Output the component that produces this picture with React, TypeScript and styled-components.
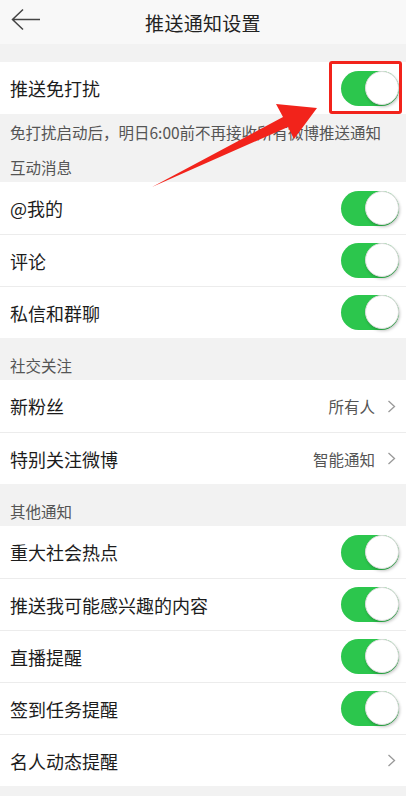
import React from "react"
import styled, { createGlobalStyle } from "styled-components"

const GlobalStyle = createGlobalStyle`
  html, body {
    margin: 0;
    padding: 0;
    background: #f2f2f2;
  }
  body {
    font-family: "Noto Sans CJK SC", "Noto Sans", sans-serif;
    -webkit-font-smoothing: antialiased;
  }
`

const Page = styled.div`
  position: relative;
  width: 406px;
  height: 796px;
  overflow: hidden;
  background: #f2f2f2;
`

const Header = styled.div`
  position: relative;
  display: flex;
  align-items: center;
  justify-content: center;
  height: 44px;
  background: #f8f8f8;
  margin-bottom: 18px;
`

const BackButton = styled.div`
  position: absolute;
  left: 11px;
  top: 8px;
  width: 30px;
  height: 24px;
  display: flex;
  align-items: center;
`

const Title = styled.div`
  font-size: 19px;
  color: #222;
  letter-spacing: 0.3px;
`

const Group = styled.div`
  background: #fff;
`

const Row = styled.div<{ first?: boolean }>`
  display: flex;
  align-items: center;
  justify-content: space-between;
  height: 52px;
  box-sizing: border-box;
  padding: 0 7px 0 10px;
  border-top: ${(p) => (p.first ? "none" : "1px solid #ececec")};
`

const Label = styled.div`
  font-size: 18px;
  color: #1c1c1c;
`

const Hint = styled.div`
  padding: 8px 10px;
  font-size: 15.5px;
  line-height: 20px;
  color: #555;
  white-space: nowrap;
`

const SectionTitle = styled.div<{ compact?: boolean }>`
  padding: ${(p) => (p.compact ? "8px" : "18px")} 10px 6px;
  font-size: 15.5px;
  line-height: 18px;
  color: #555;
`

const Right = styled.div`
  display: flex;
  align-items: center;
  gap: 12px;
  padding-right: 3px;
`

const Value = styled.div`
  font-size: 15.5px;
  color: #555;
`

const Track = styled.div`
  position: relative;
  width: 58px;
  height: 35px;
  border-radius: 18px;
  background: #2cc64d;
`

const Knob = styled.div`
  position: absolute;
  right: 0;
  top: 0;
  width: 34px;
  height: 34px;
  border-radius: 50%;
  background: #fff;
  border: 1px solid #dcdcdc;
  box-sizing: border-box;
  box-shadow: 1px 2px 3px rgba(0, 0, 0, 0.22);
`

const BottomSpace = styled.div`
  height: 18px;
`

const Highlight = styled.div`
  position: absolute;
  left: 329px;
  top: 61px;
  width: 73px;
  height: 53px;
  box-sizing: border-box;
  border: 3px solid #f2231b;
  border-radius: 3px;
`

const ArrowLayer = styled.svg`
  position: absolute;
  left: 0;
  top: 0;
  pointer-events: none;
`

const Toggle = () => (
  <Track>
    <Knob />
  </Track>
)

const Chevron = () => (
  <svg width="9" height="13" viewBox="0 0 9 13">
    <path d="M1.5 1 L7.5 6.5 L1.5 12" fill="none" stroke="#999" strokeWidth="1.3" />
  </svg>
)

type Item = { label: string; value?: string; toggle?: boolean }

const interaction: Item[] = [
  { label: "@我的", toggle: true },
  { label: "评论", toggle: true },
  { label: "私信和群聊", toggle: true },
]

const social: Item[] = [
  { label: "新粉丝", value: "所有人" },
  { label: "特别关注微博", value: "智能通知" },
]

const others: Item[] = [
  { label: "重大社会热点", toggle: true },
  { label: "推送我可能感兴趣的内容", toggle: true },
  { label: "直播提醒", toggle: true },
  { label: "签到任务提醒", toggle: true },
  { label: "名人动态提醒", value: "" },
]

const renderRows = (items: Item[]) =>
  items.map((it, i) => (
    <Row key={it.label} first={i === 0}>
      <Label>{it.label}</Label>
      {it.toggle ? (
        <Toggle />
      ) : (
        <Right>
          {it.value && <Value>{it.value}</Value>}
          <Chevron />
        </Right>
      )}
    </Row>
  ))

export default function App() {
  return (
    <Page>
      <GlobalStyle />
      <Header>
        <BackButton>
          <svg width="30" height="24" viewBox="0 0 30 24">
            <path d="M12 1.5 L1.5 11.5 L12 21.5 M1.5 11.5 H29" fill="none" stroke="#444" strokeWidth="1.5" />
          </svg>
        </BackButton>
        <Title>推送通知设置</Title>
      </Header>

      <Group>
        <Row first>
          <Label>推送免打扰</Label>
          <Toggle />
        </Row>
      </Group>
      <Hint>免打扰启动后，明日6:00前不再接收所有微博推送通知</Hint>

      <SectionTitle compact>互动消息</SectionTitle>
      <Group>{renderRows(interaction)}</Group>

      <SectionTitle>社交关注</SectionTitle>
      <Group>{renderRows(social)}</Group>

      <SectionTitle>其他通知</SectionTitle>
      <Group>{renderRows(others)}</Group>
      <BottomSpace />

      <Highlight />
      <ArrowLayer width="406" height="796" viewBox="0 0 406 796">
        <polygon
          points="152,187 283,117 276,104 317,108 294,139 288,127"
          fill="#f2231b"
        />
      </ArrowLayer>
    </Page>
  )
}
